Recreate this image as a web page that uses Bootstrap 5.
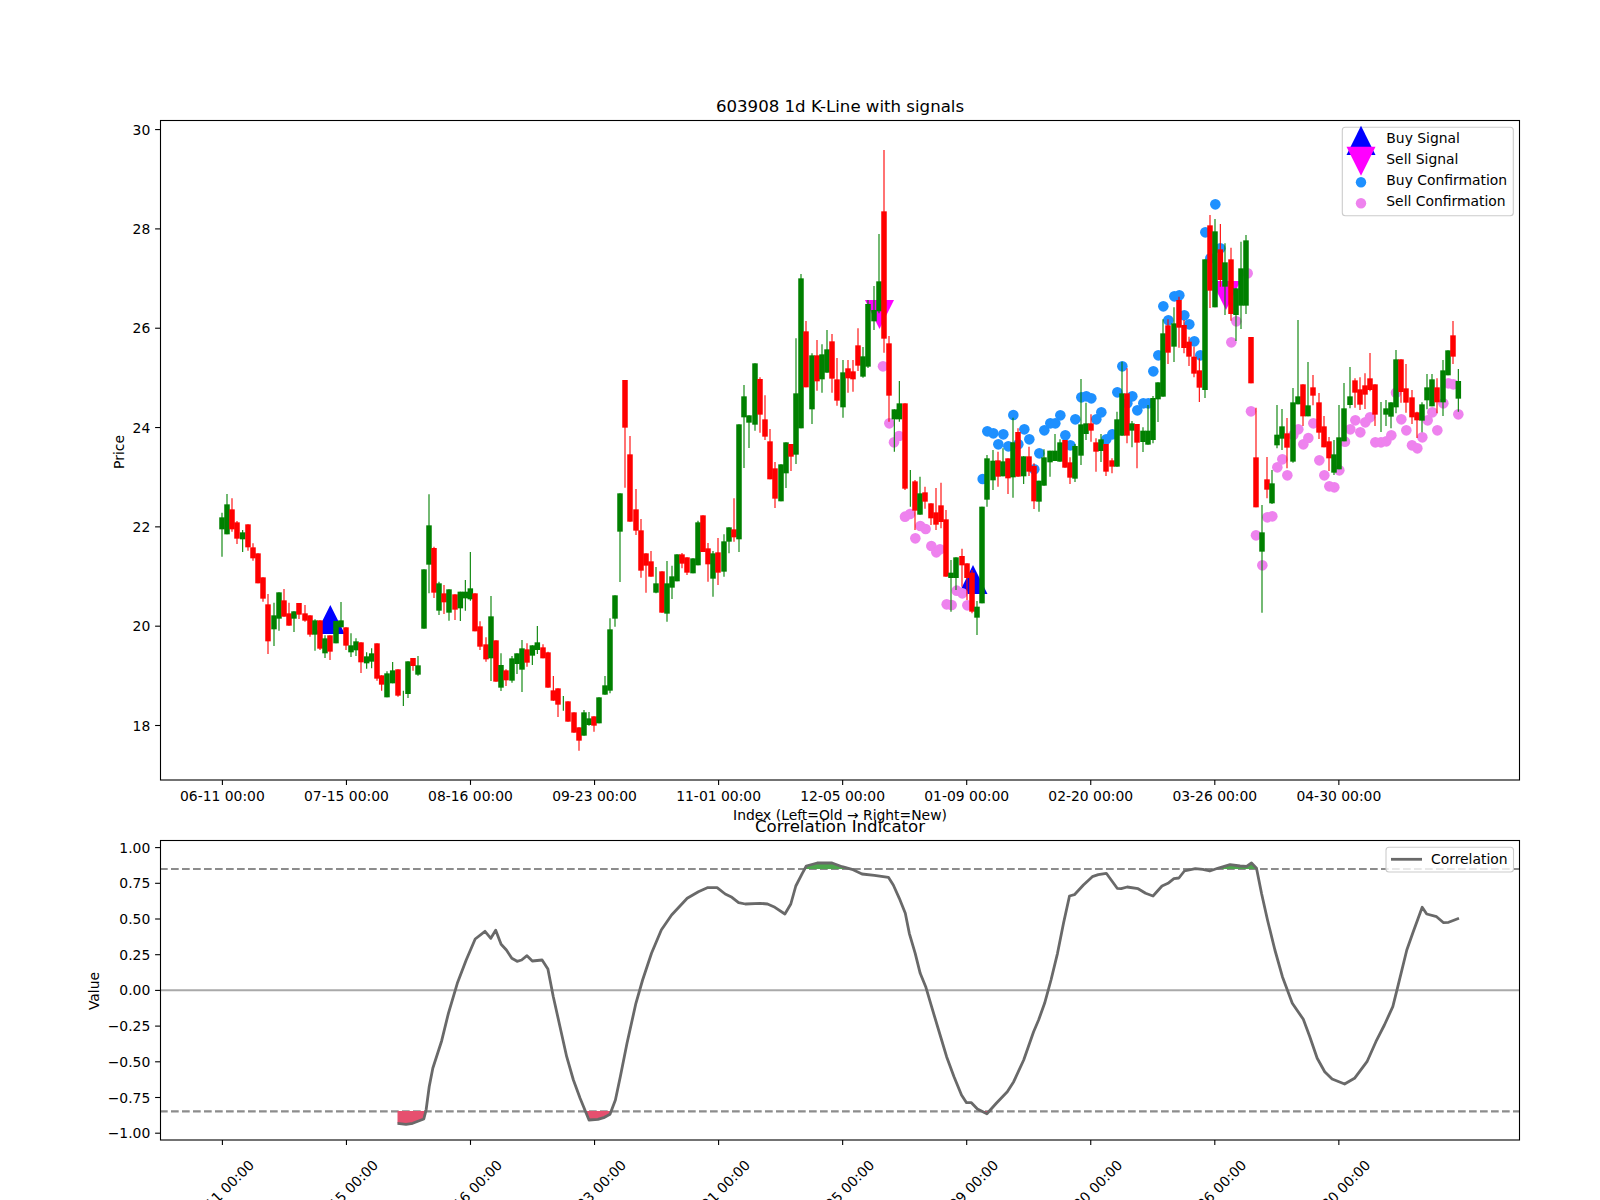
<!DOCTYPE html>
<html lang="en">
<head>
<meta charset="utf-8">
<title>603908 1d K-Line with signals</title>
<link href="https://cdn.jsdelivr.net/npm/bootstrap@5.3.0/dist/css/bootstrap.min.css" rel="stylesheet">
<style>
body { background: #fff; margin: 0; overflow: hidden; }
.fig-canvas { width: 1600px; height: 1200px; }
.fig-canvas text { font-family: "DejaVu Sans", sans-serif; font-size: 13.9px; fill: #000; }
.fig-canvas text.fig-title { font-size: 16.6px; }
.mid { text-anchor: middle; }
.end { text-anchor: end; }
.spine { fill: none; stroke: #000; stroke-width: 1.1; }
.tick-mark { stroke: #000; stroke-width: 1.1; }
.legend-box { fill: rgba(255,255,255,.8); stroke: #ccc; stroke-width: 1.1; }
.ref-dash { stroke: #8c8c8c; stroke-width: 2.1; stroke-dasharray: 7.7 3.3; }
.ref-zero { stroke: #a9a9a9; stroke-width: 2; }
.corr-line { fill: none; stroke: #696969; stroke-width: 2.8; stroke-linejoin: round; }
.fill-low { fill: #e6506f; }
.fill-high { fill: #4da64d; }
</style>
</head>
<body class="bg-white">
<main class="d-flex justify-content-start">
<svg id="fig" class="fig-canvas d-block" viewBox="0 0 1600 1200" xmlns="http://www.w3.org/2000/svg">
  <text class="fig-title mid" x="840" y="112">603908 1d K-Line with signals</text>
  <g id="marks"></g>
  <g id="sticks"></g>
  <rect class="spine" x="160.5" y="120.5" width="1359" height="659.5"/>
  <text class="mid" transform="translate(124 452) rotate(-90)">Price</text>
  <text class="mid" x="840" y="820">Index (Left=Old → Right=New)</text>
  <g id="legendTop">
    <rect class="legend-box" x="1342.3" y="127.3" width="171" height="88.4" rx="3"/>
    <polygon fill="#00f" points="1361,125.7 1375.5,155 1346.5,155"/>
    <polygon fill="#f0f" points="1346.5,146.7 1375.5,146.7 1361,175.7"/>
    <circle cx="1361" cy="182.3" r="5.2" fill="#1e90ff"/>
    <circle cx="1361" cy="203.3" r="5.2" fill="#ee82ee"/>
    <text x="1386.3" y="143.3">Buy Signal</text>
    <text x="1386.3" y="164.3">Sell Signal</text>
    <text x="1386.3" y="185.3">Buy Confirmation</text>
    <text x="1386.3" y="206.3">Sell Confirmation</text>
  </g>
  <text class="fig-title mid" x="840" y="831.7">Correlation Indicator</text>
  <line class="ref-zero" x1="160" x2="1520" y1="990.3" y2="990.3"/>
  <line class="ref-dash" x1="160" x2="1520" y1="869" y2="869"/>
  <line class="ref-dash" x1="160" x2="1520" y1="1111.4" y2="1111.4"/>
  <g id="corr"></g>
  <rect class="spine" x="160.5" y="840.5" width="1359" height="299.5"/>
  <text class="mid" transform="translate(99 991) rotate(-90)">Value</text>
  <g id="legendBot">
    <rect class="legend-box" x="1386" y="847.3" width="127.5" height="24.7" rx="3"/>
    <line x1="1391" x2="1422" y1="859.3" y2="859.3" stroke="#696969" stroke-width="2.8"/>
    <text x="1431" y="864.3">Correlation</text>
  </g>
  <g id="axes"></g>
</svg>
</main>
<script>
const NS = 'http://www.w3.org/2000/svg';
function el(parent, tag, attrs, text) {
  const n = document.createElementNS(NS, tag);
  for (const k in attrs) n.setAttribute(k, attrs[k]);
  if (text !== undefined) n.textContent = text;
  document.getElementById(parent).appendChild(n);
  return n;
}
const COL = { g: '#008000', r: '#ff0000' };
function sticks(x0, y0, data) {
  data.split(';').forEach(row => {
    const p = row.trim().split(/\s+/);
    if (p.length < 6) return;
    const x = x0 + (+p[1]) / 3, c = COL[p[0]];
    const Y = v => y0 + (+v) / 3;
    el('sticks', 'line', { x1: x, x2: x, y1: Y(p[2]), y2: Y(p[5]), stroke: c, 'stroke-width': 1.1 });
    if (p[3] !== p[4]) el('sticks', 'rect', { x: x - 2.75, y: Y(p[3]), width: 5.5, height: Y(p[4]) - Y(p[3]), fill: c });
  });
}
sticks(160, 420, `g 186 278 292 328 410;g 201 222 253 343 343;r 216 235 268 328 335;r 231 303 307 356 372;g 248 330 337 358 396;r 264 313 313 382 392;r 279 370 382 415 422;r 294 400 400 490 490;r 309 472 472 536 545;r 324 522 553 664 702;g 342 548 586 628 678;g 357 517 517 596 632;r 372 507 541 590 590;r 387 548 580 617 617;g 402 574 574 596 636;r 417 549 549 584 597;r 435 555 580 602 605;r 450 586 586 644 650;g 465 598 601 644 692;r 480 601 601 686 690;g 495 646 655 700 714;r 510 646 646 695 720;g 528 603 603 670 670;g 543 546 601 622 622;r 558 622 622 677 690;g 573 640 676 697 711;g 588 655 664 691 708;r 603 667 667 727 759;g 620 697 709 730 746;g 635 685 700 725 745;r 651 670 670 776 782;r 665 766 766 794 812;g 681 754 760 832 832;g 698 726 751 790 790;r 714 748 748 827 830;g 730 812 830 830 858;g 744 724 724 822 834;r 759 714 714 738 752;g 774 708 736 764 767;g 792 448 448 626 626`);
sticks(420, 360, `g 27 403 496 614 700;r 42 560 564 698 714;g 57 665 670 752 765;r 72 675 700 727 762;g 87 688 688 758 782;r 105 703 703 749 780;g 121 695 695 745 783;g 136 660 695 715 752;g 151 576 685 718 722;r 165 700 700 814 814;r 180 784 799 860 870;r 198 832 853 898 905;g 213 708 769 895 963;r 228 841 841 965 965;g 243 880 915 983 993;r 258 928 931 961 978;g 276 888 895 962 968;g 291 880 880 912 942;g 306 840 865 929 996;r 321 850 868 908 920;g 337 856 856 887 915;g 352 798 847 870 882;r 369 853 862 895 895;r 384 875 877 983 983;r 400 948 991 1022 1022;r 414 985 985 1034 1071;g 430 1008 1030 1030 1052;r 444 1024 1024 1085 1085;r 462 1057 1057 1118 1118;r 477 1102 1102 1142 1172;g 492 1050 1057 1127 1127;g 507 1056 1075 1095 1097;r 522 1069 1069 1097 1115;g 537 1012 1012 1090 1090;g 555 948 976 1004 1004;g 570 775 808 992 1000;g 585 706 706 776 800;g 600 400 400 515 666;r 615 60 60 203 383;r 630 228 283 485 485;r 648 387 448 512 525;r 663 477 511 632 653;r 678 580 580 617 698;r 693 573 604 650 650;g 708 621 670 698 700;r 726 634 634 758 758;g 741 603 670 761 785;g 756 617 649 683 717;g 771 583 583 664 664;r 786 579 583 611 625;r 801 592 592 638 645;g 819 595 595 640 640;g 834 482 487 616 616;r 849 466 466 576 576;r 864 549 565 613 665;g 879 573 580 656 710;r 894 534 577 638 675`);
sticks(700, 140, `g 72 1183 1204 1295 1310;g 87 1162 1162 1205 1240;r 102 1075 1168 1192 1205;g 117 853 853 1198 1236;g 132 735 769 832 984;g 147 826 826 848 924;g 165 670 670 854 872;r 180 712 717 824 878;r 195 766 838 890 900;r 210 867 904 1018 1018;r 225 966 985 1076 1104;g 243 973 973 1084 1084;g 258 907 907 1000 1044;r 273 912 912 950 993;g 288 595 760 944 972;g 303 402 415 865 865;r 318 543 574 742 742;g 336 640 646 808 852;r 351 600 646 724 752;g 366 613 643 718 758;g 381 570 628 698 698;r 396 582 604 716 758;r 411 654 718 782 797;g 429 660 697 802 833;r 444 660 685 715 758;r 459 660 694 718 755;r 474 565 616 677 693;g 489 621 649 710 713;g 504 480 492 680 684;g 522 438 510 544 570;g 537 282 424 514 520;r 552 30 214 596 638;r 567 588 610 767 845;g 583 808 808 838 935;g 598 723 790 838 845;r 615 790 790 1046 1050;g 631 990 1040 1040 1100;r 645 1020 1024 1112 1170;g 660 1010 1060 1124 1124;r 675 1040 1057 1085 1106;r 693 1090 1090 1135 1155;r 708 1044 1117 1154 1170;r 723 1028 1096 1146 1165;r 738 1110 1138 1310 1310;g 753 1260 1298 1314 1415;g 768 1252 1252 1314 1350;r 786 1226 1248 1276 1340;r 801 1270 1270 1314 1380;r 816 1290 1298 1415 1420;g 831 1383 1400 1433 1485;g 846 1100 1100 1390 1390;g 861 945 955 1079 1100;g 879 930 962 1021 1050;r 894 935 961 1010 1040`);
sticks(980, 360, `g 69 265 304 349 349;r 84 295 295 355 402;g 99 173 247 352 413;r 114 205 216 350 350;g 131 289 289 349 372;r 147 260 289 335 348;r 162 310 318 424 447;g 177 362 362 425 455;g 192 268 292 377 377;g 210 272 272 307 350;g 225 222 272 303 303;g 240 238 247 305 305;r 255 240 240 323 323;r 270 292 307 353 372;g 285 252 258 356 366;g 303 57 193 287 315;g 318 128 190 222 240;r 333 163 190 212 245;r 348 235 247 275 335;g 363 222 238 273 306;r 378 252 252 335 348;r 396 295 301 320 340;g 411 155 178 320 320;g 426 5 100 227 227;r 441 25 100 227 250;g 456 183 190 212 262;r 471 192 192 248 325;g 489 202 212 246 276;g 504 135 212 254 254;g 519 108 114 240 250;g 534 67 67 118 186`);
sticks(1140, 190, `g 69 388 430 620 620;r 84 388 406 488 522;g 102 352 400 470 516;r 117 320 330 413 473;r 132 390 405 474 490;r 147 440 455 500 528;r 162 470 500 551 562;r 178 505 541 593 636;g 195 208 208 600 624;r 210 75 106 302 354;g 225 87 124 352 352;r 241 102 178 270 290;g 255 160 217 290 375;r 273 173 208 372 392;g 288 295 295 375 453;g 303 155 235 347 417;g 318 135 151 347 372;r 333 441 441 580 580`);
sticks(1230, 300, `r 78 323 472 622 622;g 96 615 697 755 938;r 111 471 538 569 595;g 126 510 550 610 612;g 141 315 404 436 445;g 156 327 379 416 450;r 171 354 400 443 505;g 189 264 307 485 488;g 204 60 289 313 313;r 219 253 253 349 378;g 234 186 316 349 349;r 249 225 262 287 316;r 267 279 307 398 417;r 282 348 379 442 442;r 297 411 424 475 513;g 312 420 463 518 525;g 327 315 412 508 508;g 342 249 325 424 424;g 360 201 289 315 325;r 375 235 241 278 323;r 390 232 268 314 330;r 405 220 256 284 327;r 420 159 235 270 274;r 435 253 253 344 378;g 453 306 350 350 396;g 468 300 325 344 378;g 483 307 307 350 385;g 498 150 178 322 340;r 513 178 178 276 308;r 528 192 265 308 338;r 546 270 292 352 372;r 561 335 337 361 414;g 576 307 313 362 397;g 591 222 262 301 328;g 606 222 238 319 319;r 621 235 262 307 340;g 639 180 211 307 348;g 654 151 151 226 226;r 669 63 106 170 192;g 685 207 243 296 335`);

function tri(points, fill) { el('marks', 'polygon', { points, fill }); }
tri('330.3,605 344.8,634 315.8,634', '#00f');
tri('973,565 987.5,594 958.5,594', '#00f');
tri('865,300 894,300 879.5,329', '#f0f');
tri('1211.5,281 1240.5,281 1226,310', '#f0f');
function dots(x0, y0, color, list) {
  for (let i = 0; i < list.length; i += 2)
    el('marks', 'circle', { cx: x0 + list[i] / 3, cy: y0 + list[i + 1] / 3, r: 5.3, fill: color });
}
const V = '#ee82ee', B = '#1e90ff';
dots(700, 140, V, [549,679,568,850,597,888,582,907,615,1130,630,1122,661,1158,677,1167,646,1195,694,1218,709,1237,720,1228,770,1352,787,1360,740,1393,755,1395,802,1396]);
dots(1140, 190, V, [289,394,274,457,323,250]);
dots(1230, 300, V, [63,334,78,706,97,796,112,652,127,649,142,502,157,478,172,526,190,405,205,388,220,433,235,414,250,370,268,481,283,526,298,559,313,562,328,511,345,425,361,388,376,361,391,397,406,367,420,352,436,427,453,427,469,424,484,406,498,278,514,358,529,391,546,436,562,445,577,412,593,361,607,337,622,391,640,310,655,250,670,253,685,343]);
dots(980, 360, B, [8,357,22,214,40,220,70,223,55,253,85,259,115,253,100,165,133,208,148,238,163,328,178,280,193,211,211,190,226,190,241,166,256,226,271,256,286,178,304,112,319,109,334,115,349,178,364,157,379,238,397,223,412,97,427,19,442,130,457,109,472,151,490,130,505,130]);
dots(1140, 190, B, [40,544,55,496,70,349,85,391,103,319,118,316,133,376,148,403,163,454,181,496,196,127,211,205,226,43,241,175]);

const L8 = x => 60 + x / 2.24, L9 = x => 760 + x / 2.01, LY = y => 790 + y / 3;
function pts(fn, arr) { const o = []; for (let i = 0; i < arr.length; i += 2) o.push(fn(arr[i]).toFixed(1) + ',' + LY(arr[i + 1]).toFixed(1)); return o; }
el('corr', 'polygon', { class: 'fill-low', points: pts(L8, [756,963,756,1000,775,1003,790,1000,815,987,818,963]).join(' ') });
el('corr', 'polygon', { class: 'fill-low', points: pts(L8, [1178,963,1185,990,1205,988,1220,982,1232,973,1236,963]).join(' ') });
el('corr', 'polygon', { class: 'fill-low', points: pts(L9, [440,963,456,971,462,963]).join(' ') });
el('corr', 'polygon', { class: 'fill-high', points: pts(L9, [91,237,93,228,115,219,145,219,165,230,172,237]).join(' ') });
el('corr', 'polygon', { class: 'fill-high', points: pts(L9, [925,237,945,224,965,228,978,229,988,219,998,237]).join(' ') });
const line = pts(L8, [756,1000,775,1003,790,1000,815,987,820,960,827,890,835,835,855,752,870,670,890,580,910,510,930,447,952,424,965,445,976,421,988,463,1000,480,1012,505,1024,514,1034,510,1046,497,1058,513,1080,510,1093,537,1105,620,1120,710,1135,800,1150,870,1165,925,1185,990,1205,988,1220,982,1232,973,1244,930,1255,860,1270,760,1290,640,1305,570,1325,490,1347,420,1370,375,1405,325,1430,305,1450,293,1472,293,1490,312,1505,322,1520,338,1535,342])
  .concat(pts(L9, [0,340,15,342,30,352,50,372,62,342,72,288,85,250,93,228,115,219,145,219,165,230,185,238,205,252,230,256,258,262,268,285,280,325,292,370,300,430,312,490,322,550,333,590,345,650,362,735,375,800,390,860,405,915,415,938,425,938,437,957,456,971,475,940,497,905,510,875,530,810,550,725,560,690,572,640,585,570,598,490,610,400,622,318,632,314,650,285,668,260,680,254,696,250,718,295,726,296,738,291,760,296,775,310,790,318,808,288,820,280,832,266,842,264,853,243,875,236,890,238,904,243,920,235,945,224,965,228,978,229,988,219,998,235,1008,310,1020,390,1035,480,1050,560,1070,640,1092,688,1105,740,1120,805,1135,845,1150,867,1175,882,1195,865,1220,815,1238,755,1255,705,1272,650,1282,590,1300,480,1312,430,1331,352,1340,372,1360,380,1374,398,1384,397,1396,390,1405,385]));
el('corr', 'polyline', { class: 'corr-line', points: line.join(' ') });

const dates = ['06-11','07-15','08-16','09-23','11-01','12-05','01-09','02-20','03-26','04-30'];
dates.forEach((d, i) => {
  const x = 222.4 + i * 124.05, label = d + ' 00:00';
  el('axes', 'line', { class: 'tick-mark', x1: x, x2: x, y1: 780, y2: 784.9 });
  el('axes', 'text', { class: 'mid', x, y: 801 }, label);
  el('axes', 'line', { class: 'tick-mark', x1: x, x2: x, y1: 1140, y2: 1144.9 });
  el('axes', 'text', { class: 'mid', transform: `translate(${x + 2.5} 1196) rotate(-45)` }, label);
});
for (let v = 18; v <= 30; v += 2) {
  const y = 725.5 - (v - 18) * 49.66;
  el('axes', 'line', { class: 'tick-mark', x1: 155.1, x2: 160, y1: y, y2: y });
  el('axes', 'text', { class: 'end', x: 150.3, y: y + 5 }, v);
}
for (let k = -4; k <= 4; k++) {
  const v = k * 0.25, y = 990.4 - v * 142.8;
  el('axes', 'line', { class: 'tick-mark', x1: 155.1, x2: 160, y1: y, y2: y });
  el('axes', 'text', { class: 'end', x: 150.3, y: y + 5 }, (v < 0 ? '\u2212' : '') + Math.abs(v).toFixed(2));
}
</script>
<script src="https://cdn.jsdelivr.net/npm/bootstrap@5.3.0/dist/js/bootstrap.bundle.min.js"></script>
</body>
</html>
